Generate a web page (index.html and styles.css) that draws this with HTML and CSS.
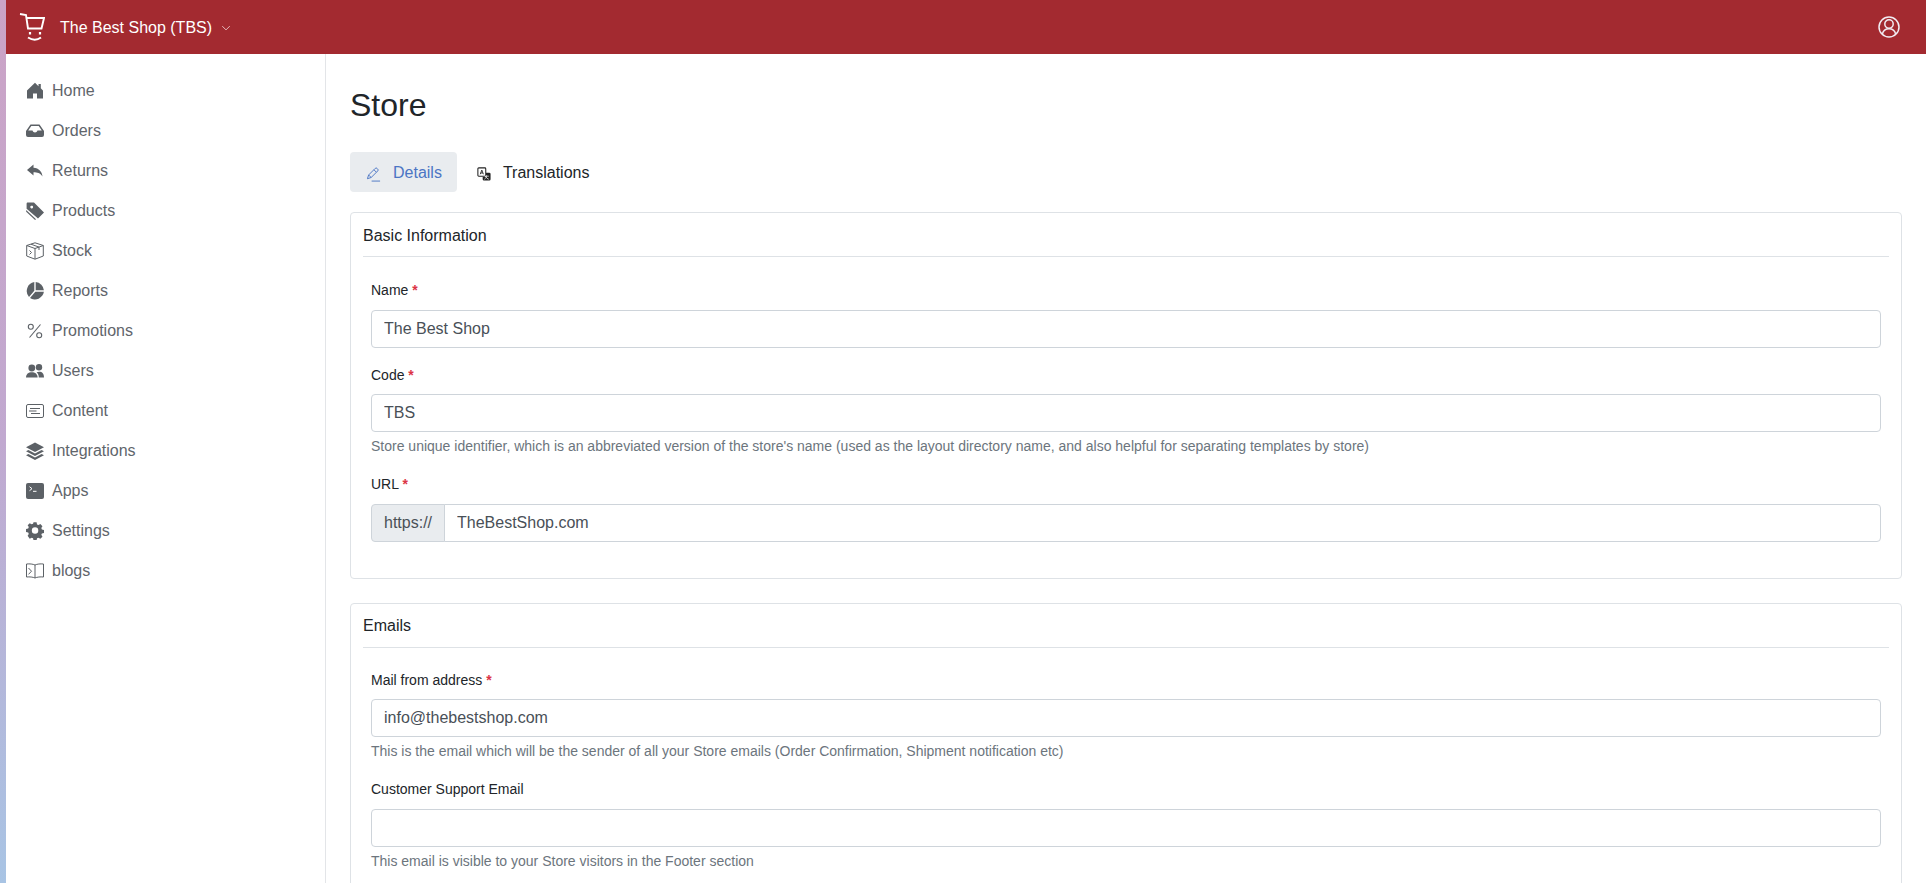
FILE: index.html
```html
<!DOCTYPE html>
<html lang="en">
<head>
<meta charset="utf-8">
<title>Store</title>
<link rel="stylesheet" href="styles.css">
</head>
<body>
<div class="strip"></div>
<div class="app">
  <header class="topbar">
    <svg class="logo" viewBox="0 0 26 28" fill="none" stroke="#fff" stroke-width="1.900"><path d="M1 1 7 2 9 15.500H22.500L25 5H7.300"/><path d="M11 19v2.500M21 19v2.500" stroke-width="2.200"/><path d="M9 24.500Q16 29 22 24.500" stroke-width="2"/></svg>
    <span class="shop">The Best Shop (TBS)</span>
    <svg class="caret" viewBox="0 0 16 16" fill="none" stroke="#f3d9d9" stroke-width="1.300"><path d="M2 5l6 6 6-6"/></svg>
    <svg class="user" viewBox="0 0 22 22" fill="none" stroke="#f2ecf2" stroke-width="1.500"><circle cx="11" cy="11" r="10"/><circle cx="11" cy="8" r="4.200"/><path d="M4.400 18c.7-3 3-5.200 6.600-5.200s5.900 2.200 6.600 5.200"/></svg>
  </header>
  <div class="body">
    <nav class="side">
      <a class="nav"><svg class="ic" viewBox="0 0 18 18" fill="#5c6166"><path d="M9 .8 1 8.500V16.500H7V11.500H11V16.500H17V8.500L14.800 6.300V2H12.500V4.200Z"/></svg>Home</a>
      <a class="nav"><svg class="ic" viewBox="0 0 18 18" fill="#5c6166"><path d="M4.500 2.500h9L18 9v4a2 2 0 0 1-2 2H2a2 2 0 0 1-2-2V9Zm.8 1.500L2.200 8.500h4.300c.4 1.300 1.300 2 2.500 2s2.100-.7 2.500-2h4.300L12.700 4Z"/></svg>Orders</a>
      <a class="nav"><svg class="ic" viewBox="0 0 18 18" fill="#5c6166"><path d="M7.500 2.500 1 8l6.500 5.500V10.300c4 0 6.500.7 9 4.200C16 9.500 13 6.300 7.500 5.800Z"/></svg>Returns</a>
      <a class="nav"><svg class="ic" viewBox="0 0 18 18" fill="#5c6166"><path d="M.6 1.700C.6 1 1.100.5 1.800.5H8l10 10-6 6L.6 6.800Zm3.700 3.400a1.400 1.400 0 1 0 0-.1Z"/><path d="M.2 8 10 17.200l-.9.800L.2 9.800Z"/></svg>Products</a>
      <a class="nav"><svg class="ic" viewBox="0 0 18 18" fill="none" stroke="#5c6166" stroke-width="1"><path d="M9 .8 17.300 3.500V14L9 17.200.7 14V3.500Z"/><path d="M.7 3.500 9 6.500 17.300 3.500M9 6.500V17M5 2.200l8 2.900V8"/><path d="M3.500 8.500l2 2-2 2"/></svg>Stock</a>
      <a class="nav"><svg class="ic" viewBox="0 0 18 18" fill="#5c6166"><path d="M8.300.1v8.600L3 14.900A9 9 0 0 1 8.300.1Z"/><path d="M9.700.1A9 9 0 0 1 17.900 8.300H9.700Z"/><path d="M4 15.900 9.300 9.700h8.600A9 9 0 0 1 4 15.900Z"/></svg>Reports</a>
      <a class="nav"><svg class="ic" viewBox="0 0 18 18" fill="none" stroke="#5c6166" stroke-width="1.100"><path d="M14.500 2.500 3.500 15.500"/><circle cx="4.800" cy="4.800" r="2.500"/><circle cx="13.200" cy="13.200" r="2.500"/></svg>Promotions</a>
      <a class="nav"><svg class="ic" viewBox="0 0 18 18" fill="#5c6166"><circle cx="5.800" cy="6" r="3.400"/><circle cx="13" cy="5.300" r="3.200"/><path d="M0 15.500c0-3.400 2.400-5.300 5.800-5.300s5.800 1.900 5.800 5.300Z"/><path d="M12.800 15.500c0-2.300-.8-4-2.200-5.200.8-.4 1.600-.6 2.500-.6 3.200 0 4.900 2 4.900 5.800Z"/></svg>Users</a>
      <a class="nav"><svg class="ic" viewBox="0 0 18 18" fill="none" stroke="#5c6166" stroke-width="1"><rect x=".5" y="2.500" width="17" height="13" rx="1.500"/><path d="M4 6.500h10M3 9h7.500M5 11.500h9" stroke-width="1.200"/></svg>Content</a>
      <a class="nav"><svg class="ic" viewBox="0 0 18 18" fill="#5c6166"><path d="M9 .5 18 5.200 9 10 0 5.200Z"/><path d="M2.400 8 9 11.500 15.600 8 18 9.200 9 14 0 9.200Z"/><path d="M2.400 12 9 15.500 15.600 12 18 13.200 9 18 0 13.200Z"/></svg>Integrations</a>
      <a class="nav"><svg class="ic" viewBox="0 0 18 18"><rect x="0" y="1" width="18" height="16" rx="2" fill="#5c6166"/><path d="M3.500 4.700 6 6.700 3.500 8.700M7 9.300h3.500" fill="none" stroke="#fff" stroke-width="1"/></svg>Apps</a>
      <a class="nav"><svg class="ic" viewBox="0 0 18 18" fill="#5c6166"><path fill-rule="evenodd" d="M7.400.6h3.200l.5 2.300 1.500.7 2-1.200 2.200 2.300-1.200 2 .6 1.500 2.300.5v3.100l-2.300.5-.6 1.500 1.200 2-2.200 2.200-2-1.200-1.500.6-.5 2.300H7.400l-.5-2.300-1.500-.6-2 1.200L1.200 14.900l1.200-2-.6-1.500-2.300-.5V7.700l2.300-.5.600-1.500-1.200-2L3.400 1.500l2 1.200 1.500-.6ZM9 5.800a3.400 3.400 0 1 0 0 6.800 3.400 3.400 0 0 0 0-6.800Z" transform="translate(.5 -.3) scale(.95)"/></svg>Settings</a>
      <a class="nav"><svg class="ic" viewBox="0 0 18 18" fill="none" stroke="#5c6166" stroke-width="1"><path d="M9 3C7 2 3.500 1.700.5 2v13c3-.3 6.500 0 8.500 1 2-1 5.500-1.300 8.500-1V2C14.500 1.700 11 2 9 3ZM9 3V16"/><path d="M2.500 6 5.500 9.200 2.500 12.400"/></svg>blogs</a>
    </nav>
    <main class="main">
      <h1 class="title">Store</h1>
      <div class="tabs">
        <a class="tab active"><svg class="tabic" viewBox="0 0 16 16" fill="none" stroke="#4b75c4" stroke-width="1"><path d="M1.500 12.500 2.800 8.500 9.800 1.500a1.400 1.400 0 0 1 2 0l.7.700a1.400 1.400 0 0 1 0 2l-7 7ZM8.500 3l2.500 2.500M2.800 8.500l2.700 2.700M6 15h9"/></svg>Details</a>
        <a class="tab next"><svg class="tabic small" viewBox="0 0 16 16"><rect x="1" y="1" width="9" height="9.500" rx="1" fill="#fff" stroke="#222" stroke-width="1.200"/><path d="M3.700 8.300 5.500 3.500l1.800 4.800M4.300 6.800h2.400" fill="none" stroke="#222" stroke-width="1"/><path d="M6.500 11.500h3.800V6.500H14a1.500 1.500 0 0 1 1.500 1.500v6a1.500 1.500 0 0 1-1.500 1.500H8a1.500 1.500 0 0 1-1.500-1.500Z" fill="#222"/><path d="M9 10.500h4.500M11 9.500c0 2-1 3.500-2.500 4.500M10 11c.6 1.400 1.800 2.500 3.500 3" fill="none" stroke="#fff" stroke-width=".8"/></svg>Translations</a>
      </div>
      <section class="card basic">
        <h2 class="card-title">Basic Information</h2>
        <div class="fields">
          <div class="field">
            <label class="label">Name <span class="req">*</span></label>
            <input class="input" value="The Best Shop">
          </div>
          <div class="field">
            <label class="label">Code <span class="req">*</span></label>
            <input class="input" value="TBS">
            <small class="help">Store unique identifier, which is an abbreviated version of the store's name (used as the layout directory name, and also helpful for separating templates by store)</small>
          </div>
          <div class="field">
            <label class="label">URL <span class="req">*</span></label>
            <div class="group"><span class="prefix">https://</span><input class="input joined" value="TheBestShop.com"></div>
          </div>
        </div>
      </section>
      <section class="card emails">
        <h2 class="card-title">Emails</h2>
        <div class="fields">
          <div class="field">
            <label class="label">Mail from address <span class="req">*</span></label>
            <input class="input" value="info@thebestshop.com">
            <small class="help">This is the email which will be the sender of all your Store emails (Order Confirmation, Shipment notification etc)</small>
          </div>
          <div class="field">
            <label class="label">Customer Support Email</label>
            <input class="input" value="">
            <small class="help">This email is visible to your Store visitors in the Footer section</small>
          </div>
        </div>
      </section>
    </main>
  </div>
</div>
</body>
</html>
```
FILE: styles.css
```css
* { box-sizing: border-box; }
html, body { height: 100%; }
body {
  margin: 0;
  display: flex;
  height: 883px;
  overflow: hidden;
  background: #fff;
  font-family: "Liberation Sans", Arial, sans-serif;
  color: #212529;
}
.strip { width: 6px; flex: none; background: linear-gradient(180deg, #cba3c6 0%, #c1a9d0 50%, #a8c4e4 100%); }
.app { flex: 1; min-width: 0; display: flex; flex-direction: column; }
.topbar {
  height: 54px;
  flex: none;
  background: #a32a30;
  display: flex;
  align-items: center;
  padding: 0 26px 0 13px;
  color: #fff;
}
.logo { width: 26px; height: 28px; }
.shop { margin-left: 15px; margin-top: 2px; font-size: 16px; color: #fff; }
.caret { width: 10px; height: 10px; margin-left: 9px; margin-top: 2px; }
.user { width: 22px; height: 22px; margin-left: auto; }
.body { flex: 1; display: flex; min-height: 0; }
.side {
  width: 320px;
  flex: none;
  border-right: 1px solid #e3e5e8;
  padding-top: 17px;
  display: flex;
  flex-direction: column;
}
.nav {
  height: 40px;
  flex: none;
  padding-left: 20px;
  display: flex;
  align-items: center;
  font-size: 16px;
  color: #5f656b;
}
.ic { width: 18px; height: 18px; margin-right: 8px; flex: none; }
.main { flex: 1; min-width: 0; padding: 0 24px; }
.title { margin: 32px 0 0; font-size: 32px; line-height: 38px; font-weight: 400; color: #212529; }
.tabs { display: flex; margin-top: 28px; height: 40px; }
.tab {
  display: flex;
  align-items: center;
  padding: 2px 16px 0;
  font-size: 16px;
  color: #212529;
  border-radius: 4px;
}
.tab.active { background: #e9ecef; color: #4b75c4; padding-right: 15px; }
.tab.next { margin-left: 4px; }
.tabic { width: 15px; height: 15px; margin-right: 12px; margin-top: 2px; }
.tabic.small { width: 14px; height: 14px; }
.card {
  border: 1px solid #dee2e6;
  border-radius: 4px;
  padding: 0 12px;
}
.card.basic { margin-top: 20px; padding-bottom: 36.5px; }
.card.emails { margin-top: 24px; padding-bottom: 80px; }
.card-title {
  margin: 0;
  height: 44px;
  line-height: 44px;
  font-size: 16px;
  font-weight: 400;
  color: #212529;
  border-bottom: 1px solid #dee2e6;
}
.basic .card-title { line-height: 46px; }
.fields { padding: 22px 8px 0; display: flex; flex-direction: column; gap: 16px; }
.emails .fields { padding-top: 20.5px; }
.field { display: flex; flex-direction: column; }
.label { font-size: 14px; line-height: 22.5px; margin-bottom: 8px; color: #212529; }
.req { color: #dc3545; font-weight: 700; }
.input {
  width: 100%;
  height: 38px;
  padding: 0 12px;
  font: 16px "Liberation Sans", Arial, sans-serif;
  color: #495057;
  background: #fff;
  border: 1px solid #ced4da;
  border-radius: 4px;
  outline: none;
}
.help { font-size: 14px; line-height: 21px; margin-top: 4px; color: #6c757d; }
.group { display: flex; }
.prefix {
  flex: none;
  height: 38px;
  line-height: 36px;
  padding: 0 12px;
  font-size: 16px;
  color: #495057;
  background: #e9ecef;
  border: 1px solid #ced4da;
  border-radius: 4px 0 0 4px;
}
.joined { flex: 1; margin-left: -1px; border-radius: 0 4px 4px 0; }
```
